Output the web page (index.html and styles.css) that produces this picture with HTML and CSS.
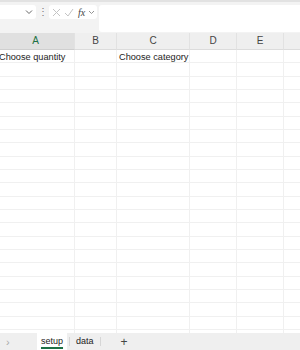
FILE: index.html
```html
<!DOCTYPE html>
<html lang="en">
<head>
    <meta charset="UTF-8">
    <title>Workbook - setup</title>
    <link rel="stylesheet" href="styles.css">
</head>
<body>
    <div class="toolbar">
        <div class="name-box">
            <svg width="8" height="6" viewBox="0 0 8 6"><path d="M1 1.5 L4 4.5 L7 1.5" fill="none" stroke="#666" stroke-width="1"/></svg>
        </div>
        <div class="grip">&#8942;</div>
        <div class="fx-box">
            <svg width="9" height="9" viewBox="0 0 9 9"><path d="M1 1 L8 8 M8 1 L1 8" stroke="#c4c4c4" stroke-width="1"/></svg>
            <svg width="10" height="9" viewBox="0 0 10 9"><path d="M1 5 L4 8 L9 1" fill="none" stroke="#c4c4c4" stroke-width="1"/></svg>
            <span class="fx">fx</span>
            <svg width="7" height="5" viewBox="0 0 7 5"><path d="M1 1 L3.5 3.5 L6 1" fill="none" stroke="#888" stroke-width="0.9"/></svg>
        </div>
        <div class="formula"></div>
    </div>

    <div class="sheet">
        <div class="grid" id="grid">
            <div class="col-head selected">A</div>
            <div class="col-head">B</div>
            <div class="col-head">C</div>
            <div class="col-head">D</div>
            <div class="col-head">E</div>
            <div class="col-head"></div>
        </div>
    </div>

    <div class="tabs">
        <span class="nav">&rsaquo;</span>
        <span class="tab active">setup</span>
        <span class="tab">data</span>
        <span class="add">+</span>
    </div>

    <script>
        const grid = document.getElementById('grid');
        const firstRow = ['Choose quantity', '', 'Choose category', '', '', ''];

        for (let r = 0; r < 22; r++) {
            for (let c = 0; c < 6; c++) {
                const cell = document.createElement('div');
                cell.className = 'cell';
                if (r === 0) cell.textContent = firstRow[c];
                grid.appendChild(cell);
            }
        }
    </script>
</body>
</html>
```

FILE: styles.css
```css
body {
    margin: 0;
    width: 300px;
    height: 350px;
    overflow: hidden;
    display: flex;
    flex-direction: column;
    font-family: 'Liberation Sans', Arial, sans-serif;
    background: #fff;
}
.toolbar {
    height: 33px;
    box-sizing: border-box;
    background: #f3f3f3;
    border-top: 2px solid #e2e2e2;
    padding-top: 3px;
    display: flex;
    align-items: flex-start;
}
.name-box {
    width: 36px;
    height: 14px;
    background: #fff;
    border-radius: 0 3px 3px 0;
    display: flex;
    align-items: center;
    justify-content: flex-end;
    padding-right: 3px;
    box-sizing: border-box;
}
.grip {
    width: 13px;
    text-align: center;
    font-size: 10px;
    line-height: 14px;
    color: #777;
}
.fx-box {
    width: 48px;
    height: 14px;
    background: #fff;
    border-radius: 3px;
    display: flex;
    align-items: center;
    gap: 3px;
    padding-left: 3px;
    box-sizing: border-box;
}
.fx {
    font-family: 'Liberation Serif', serif;
    font-style: italic;
    font-size: 10px;
    color: #444;
    margin-left: 1px;
}
.formula {
    flex: 1;
    height: 27px;
    margin-left: 2px;
    background: #fff;
    border-radius: 3px 0 0 3px;
}
.sheet {
    flex: 1;
    overflow: hidden;
}
.grid {
    margin-left: -3px;
    display: grid;
    grid-template-columns: 78px 42px 73px 47px 47px 40px;
    grid-auto-rows: 13.33px;
    grid-template-rows: 17px;
}
.col-head {
    background: #efefef;
    border-right: 1px solid #e2e2e2;
    border-bottom: 1px solid #dcdcdc;
    font-size: 10px;
    color: #444;
    text-align: center;
    line-height: 16px;
}
.col-head.selected {
    background: #e0e0e0;
    color: #1d7044;
    border-bottom-color: #cfcfcf;
}
.cell {
    border-right: 1px solid #f0f0f0;
    border-bottom: 1px solid #f0f0f0;
    font-size: 9.2px;
    color: #222;
    white-space: nowrap;
    line-height: 14px;
    padding-left: 2px;
    overflow: visible;
}
.tabs {
    height: 17px;
    background: #efefef;
    display: flex;
    align-items: center;
    font-size: 9px;
    color: #222;
}
.nav {
    width: 37px;
    padding-left: 6px;
    box-sizing: border-box;
    color: #aaa;
    font-size: 11px;
}
.tab {
    padding: 0 6px;
    height: 17px;
    line-height: 16px;
    box-sizing: border-box;
}
.tab.active {
    background: #fff;
    padding: 0 4px 0 4px;
    text-decoration: underline;
    text-decoration-color: #1d7044;
    text-decoration-thickness: 1.5px;
    text-underline-offset: 3px;
}
.tab:not(.active) {
    height: 9px;
    line-height: 9px;
    border-left: 1px solid #d6d6d6;
    border-right: 1px solid #d6d6d6;
    margin-left: 2px;
    padding: 0 6px;
}
.add {
    margin-left: 20px;
    font-size: 12px;
    color: #444;
}
```
